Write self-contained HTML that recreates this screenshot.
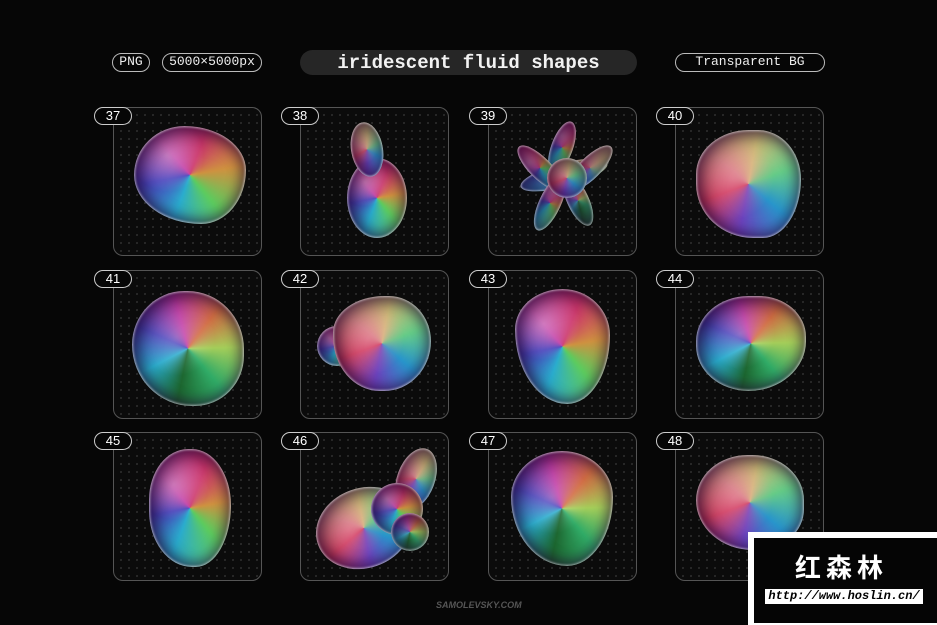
<!DOCTYPE html>
<html><head><meta charset="utf-8"><style>
*{margin:0;padding:0;box-sizing:border-box}
body{width:937px;height:625px;background:#060606;position:relative;overflow:hidden;font-family:"Liberation Mono",monospace;color:#eee}
.pill{position:absolute;border:1.5px solid #bbb;border-radius:10px;height:19px;font-size:13px;line-height:16px;text-align:center;color:#eee}
.title{position:absolute;left:300px;top:50px;width:337px;height:25px;background:#262626;border-radius:13px;font-size:19px;font-weight:bold;line-height:26px;text-align:center;color:#f2f2f2}
.card{position:absolute;width:149px;height:149px;border:1.5px solid #555;border-radius:10px;background-color:#0b0b0b;background-image:radial-gradient(circle,#2c2c2c 0.8px,transparent 1.2px);background-size:8px 8px;background-position:3px 3px}
.badge{position:absolute;left:-20px;top:-1px;width:38px;height:18px;border:1.5px solid #ccc;border-radius:9px;background:#060606;font-family:"Liberation Sans",sans-serif;font-size:13px;line-height:15px;text-align:center;color:#fff}
.b{position:absolute;border-radius:50%;filter:saturate(.85);box-shadow:inset 0 0 2px 1px rgba(255,255,255,.6),inset 0 0 12px 5px rgba(40,0,60,.55),inset 8px 8px 20px rgba(0,0,0,.35)}
.g1{background:radial-gradient(circle at 30% 30%,rgba(255,255,255,.35),transparent 35%),conic-gradient(from 20deg,#e0306f,#d89030,#4fd050,#18b0d8,#4a40d0,#d030b0,#e0306f)}
.g2{background:radial-gradient(circle at 40% 40%,rgba(255,255,255,.25),transparent 40%),conic-gradient(from 140deg,#20b060,#136a2a,#18b0d8,#4a40d0,#d030b0,#e06a3a,#a0d048,#20b060)}
.g3{background:radial-gradient(circle at 35% 45%,rgba(255,150,180,.45),transparent 45%),conic-gradient(from 250deg,#e0305a,#e08080,#d8c070,#58d080,#1898d8,#7040d0,#e0305a)}
.wm{position:absolute;left:748px;top:532px;width:189px;height:93px;background:#fff}
.wmi{position:absolute;left:754px;top:538px;width:183px;height:85px;background:#050505}
</style></head><body>
<div class="pill" style="left:112px;top:53px;width:38px">PNG</div>
<div class="pill" style="left:162px;top:53px;width:100px">5000×5000px</div>
<div class="title">iridescent fluid shapes</div>
<div class="pill" style="left:675px;top:53px;width:150px">Transparent BG</div>

<div class="card" style="left:113px;top:107px"><div class="badge">37</div>
<div class="b g1" style="left:20px;top:18px;width:112px;height:98px;border-radius:45% 55% 40% 60%/50% 45% 55% 50%"></div></div>
<div class="card" style="left:300px;top:107px"><div class="badge">38</div>
<div class="b g1" style="left:46px;top:50px;width:60px;height:80px"></div>
<div class="b g3" style="left:50px;top:14px;width:32px;height:55px;transform:rotate(-10deg)"></div></div>
<div class="card" style="left:488px;top:107px"><div class="badge">39</div>
<div class="b g1" style="left:62px;top:12px;width:22px;height:55px;transform:rotate(20deg)"></div>
<div class="b g2" style="left:30px;top:55px;width:90px;height:24px;transform:rotate(-15deg)"></div>
<div class="b g1" style="left:40px;top:30px;width:22px;height:60px;transform:rotate(-45deg)"></div>
<div class="b g3" style="left:90px;top:30px;width:22px;height:60px;transform:rotate(45deg)"></div>
<div class="b g1" style="left:50px;top:65px;width:22px;height:60px;transform:rotate(25deg)"></div>
<div class="b g2" style="left:78px;top:65px;width:22px;height:55px;transform:rotate(-25deg)"></div>
<div class="b g3" style="left:58px;top:50px;width:40px;height:40px"></div></div>
<div class="card" style="left:675px;top:107px"><div class="badge">40</div>
<div class="b g3" style="left:20px;top:22px;width:105px;height:108px;border-radius:55% 45% 40% 60%/45% 50% 60% 55%"></div></div>

<div class="card" style="left:113px;top:270px"><div class="badge">41</div>
<div class="b g2" style="left:18px;top:20px;width:112px;height:115px;border-radius:48% 52% 45% 55%"></div></div>
<div class="card" style="left:300px;top:270px"><div class="badge">42</div>
<div class="b g1" style="left:16px;top:55px;width:40px;height:40px"></div>
<div class="b g3" style="left:32px;top:25px;width:98px;height:95px;border-radius:55% 45% 50% 50%/40% 50% 55% 60%"></div></div>
<div class="card" style="left:488px;top:270px"><div class="badge">43</div>
<div class="b g1" style="left:26px;top:18px;width:95px;height:115px;border-radius:50% 50% 45% 55%/35% 40% 60% 65%"></div></div>
<div class="card" style="left:675px;top:270px"><div class="badge">44</div>
<div class="b g2" style="left:20px;top:25px;width:110px;height:95px;border-radius:50% 45% 55% 50%"></div></div>

<div class="card" style="left:113px;top:432px"><div class="badge">45</div>
<div class="b g1" style="left:35px;top:16px;width:82px;height:118px;border-radius:50% 50% 45% 55%/45% 50% 55% 50%"></div></div>
<div class="card" style="left:300px;top:432px"><div class="badge">46</div>
<div class="b g3" style="left:96px;top:14px;width:38px;height:64px;transform:rotate(20deg)"></div>
<div class="b g3" style="left:14px;top:55px;width:98px;height:80px;transform:rotate(-20deg)"></div>
<div class="b g1" style="left:70px;top:50px;width:52px;height:52px"></div>
<div class="b g2" style="left:90px;top:80px;width:38px;height:38px"></div></div>
<div class="card" style="left:488px;top:432px"><div class="badge">47</div>
<div class="b g2" style="left:22px;top:18px;width:102px;height:115px;border-radius:50% 50% 45% 55%/40% 40% 60% 60%"></div></div>
<div class="card" style="left:675px;top:432px"><div class="badge">48</div>
<div class="b g3" style="left:20px;top:22px;width:108px;height:95px;border-radius:50% 50% 45% 55%"></div></div>

<div style="position:absolute;left:436px;top:600px;font-family:'Liberation Sans',sans-serif;font-size:9px;font-weight:bold;font-style:italic;color:#555">SAMOLEVSKY.COM</div>

<div class="wm"></div><div class="wmi"></div>
<div style="position:absolute;left:795px;top:548px;font-family:'Liberation Sans','Noto Sans CJK SC',sans-serif;font-size:26px;font-weight:bold;color:#fff;letter-spacing:5px">红森林</div>
<div style="position:absolute;left:765px;top:589px;width:158px;height:15px;background:#fff;color:#000;font-family:'Liberation Mono',monospace;font-size:12px;font-style:italic;font-weight:bold;line-height:15px;text-align:center">http://www.hoslin.cn/</div>
</body></html>
